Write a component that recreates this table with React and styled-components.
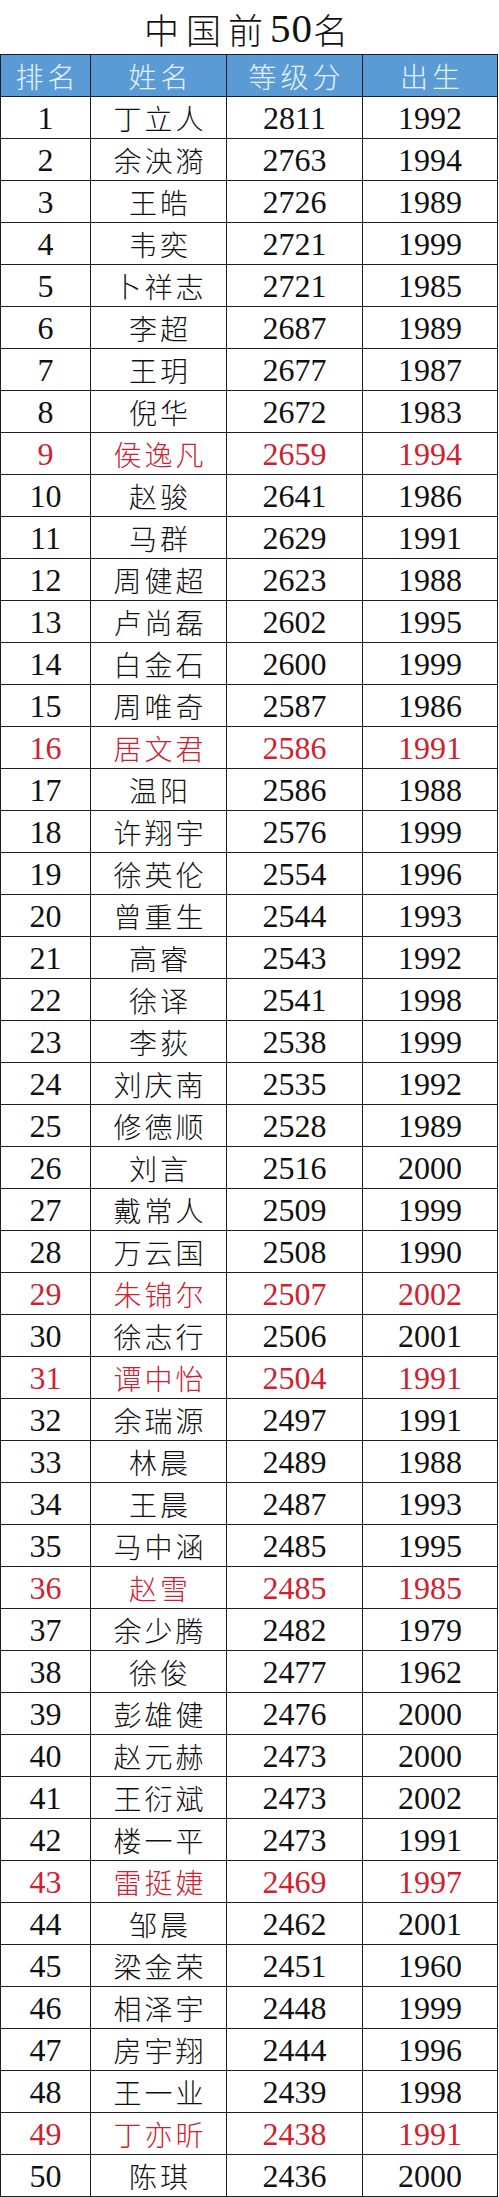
import React from 'react';
import styled, { createGlobalStyle } from 'styled-components';

const GlobalStyle = createGlobalStyle`
  html, body {
    margin: 0;
    padding: 0;
    background: #ffffff;
  }
  * {
    box-sizing: border-box;
  }
`;

const players = [
  [1, '丁立人', 2811, 1992],
  [2, '余泱漪', 2763, 1994],
  [3, '王皓', 2726, 1989],
  [4, '韦奕', 2721, 1999],
  [5, '卜祥志', 2721, 1985],
  [6, '李超', 2687, 1989],
  [7, '王玥', 2677, 1987],
  [8, '倪华', 2672, 1983],
  [9, '侯逸凡', 2659, 1994, true],
  [10, '赵骏', 2641, 1986],
  [11, '马群', 2629, 1991],
  [12, '周健超', 2623, 1988],
  [13, '卢尚磊', 2602, 1995],
  [14, '白金石', 2600, 1999],
  [15, '周唯奇', 2587, 1986],
  [16, '居文君', 2586, 1991, true],
  [17, '温阳', 2586, 1988],
  [18, '许翔宇', 2576, 1999],
  [19, '徐英伦', 2554, 1996],
  [20, '曾重生', 2544, 1993],
  [21, '高睿', 2543, 1992],
  [22, '徐译', 2541, 1998],
  [23, '李荻', 2538, 1999],
  [24, '刘庆南', 2535, 1992],
  [25, '修德顺', 2528, 1989],
  [26, '刘言', 2516, 2000],
  [27, '戴常人', 2509, 1999],
  [28, '万云国', 2508, 1990],
  [29, '朱锦尔', 2507, 2002, true],
  [30, '徐志行', 2506, 2001],
  [31, '谭中怡', 2504, 1991, true],
  [32, '余瑞源', 2497, 1991],
  [33, '林晨', 2489, 1988],
  [34, '王晨', 2487, 1993],
  [35, '马中涵', 2485, 1995],
  [36, '赵雪', 2485, 1985, true],
  [37, '余少腾', 2482, 1979],
  [38, '徐俊', 2477, 1962],
  [39, '彭雄健', 2476, 2000],
  [40, '赵元赫', 2473, 2000],
  [41, '王衍斌', 2473, 2002],
  [42, '楼一平', 2473, 1991],
  [43, '雷挺婕', 2469, 1997, true],
  [44, '邹晨', 2462, 2001],
  [45, '梁金荣', 2451, 1960],
  [46, '相泽宇', 2448, 1999],
  [47, '房宇翔', 2444, 1996],
  [48, '王一业', 2439, 1998],
  [49, '丁亦昕', 2438, 1991, true],
  [50, '陈琪', 2436, 2000],
];

const Page = styled.div`
  width: 499px;
  background: #fff;
`;

const Title = styled.h1`
  margin: 0;
  height: 54px;
  display: flex;
  align-items: center;
  justify-content: center;
  font-family: "Noto Sans CJK SC", sans-serif;
  font-weight: 300;
  font-size: 35px;
  letter-spacing: 7px;
  color: #111;
  padding-top: 2px;
`;

const Digits = styled.span`
  font-family: "Liberation Serif", serif;
  font-size: 41px;
  letter-spacing: 1px;
`;

const Table = styled.div`
  width: 498px;
  border-top: 1px solid #1e1e1e;
  border-left: 1px solid #1e1e1e;
`;

const Row = styled.div`
  display: grid;
  grid-template-columns: 90px 136px 136px 135px;
  height: 42px;
  background: ${(p) => (p.$head ? '#5b9bd5' : '#fff')};
`;

const Cell = styled.div`
  display: flex;
  align-items: center;
  justify-content: center;
  border-right: 1px solid #1e1e1e;
  border-bottom: 1px solid #1e1e1e;
  font-family: "Liberation Serif", "Noto Sans CJK SC", serif;
  font-size: 32px;
  color: ${(p) => (p.$red ? '#cf2230' : '#111')};
  padding-top: 1px;
`;

const NameCell = styled(Cell)`
  font-family: "Noto Sans CJK SC", sans-serif;
  font-weight: 300;
  font-size: 28px;
  letter-spacing: 3px;
  padding-left: 3px;
`;

const HeadCell = styled(Cell)`
  font-family: "Noto Sans CJK SC", sans-serif;
  font-weight: 300;
  font-size: 28px;
  letter-spacing: 4px;
  padding-left: 4px;
  color: #e4f3ff;
`;

export default function App() {
  return (
    <Page>
      <GlobalStyle />
      <Title>
        中国前<Digits>50</Digits>名
      </Title>
      <Table>
        <Row $head>
          <HeadCell>排名</HeadCell>
          <HeadCell>姓名</HeadCell>
          <HeadCell>等级分</HeadCell>
          <HeadCell>出生</HeadCell>
        </Row>
        {players.map(([rank, name, rating, born, red]) => (
          <Row key={rank}>
            <Cell $red={red}>{rank}</Cell>
            <NameCell $red={red}>{name}</NameCell>
            <Cell $red={red}>{rating}</Cell>
            <Cell $red={red}>{born}</Cell>
          </Row>
        ))}
      </Table>
    </Page>
  );
}
